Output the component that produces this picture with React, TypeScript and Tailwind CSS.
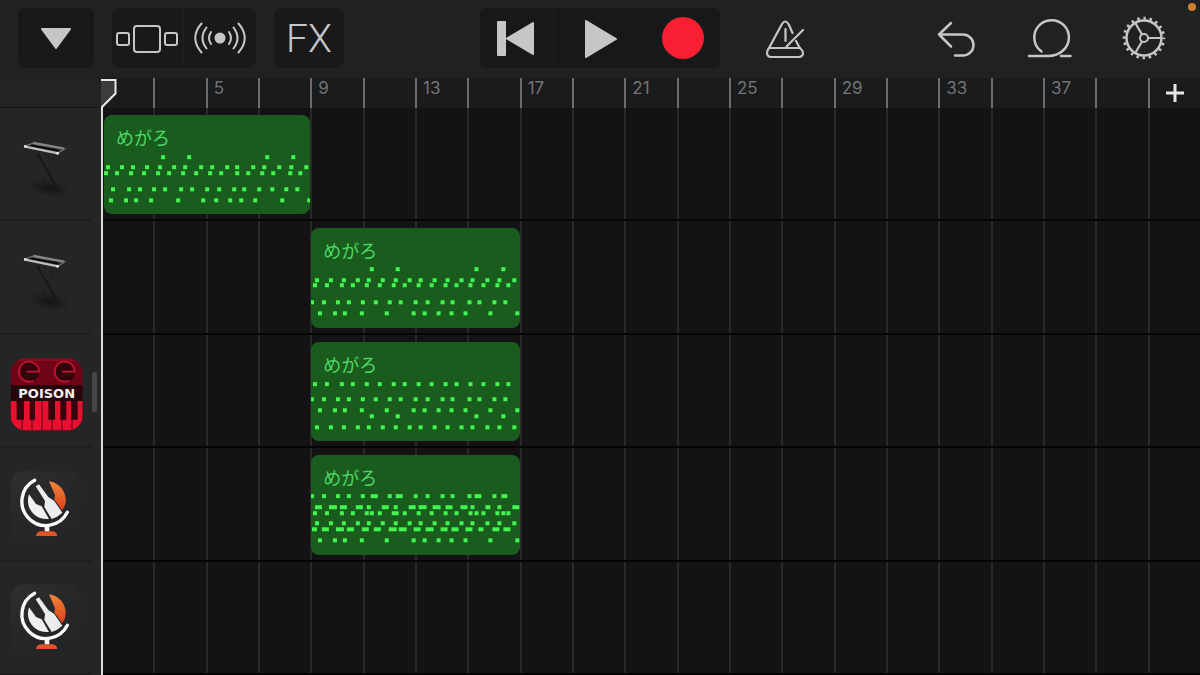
import type { ReactNode } from 'react'

// plain x positions or [x, width] pairs, grouped by vertical position
type NoteRow = { y: number; notes: (number | [number, number])[] }
type Region = { name: string; start: string; width: number; rows: NoteRow[] }
type Track = { name: string; icon: ReactNode; region?: Region }

const HIGH = [61, 87, 166, 193]
const OFFBEAT = [6, 20, 33, 47, 58, 72, 85, 99, 110, 124, 137, 151, 162, 177, 189, 204]
const BEAT = [4, 16, 31, 42, 56, 69, 83, 94, 108, 121, 135, 146, 160, 173, 187, 198]
const MID = [1, 13, 27, 38, 52, 65, 79, 90, 105, 117, 132, 142, 159, 169, 184, 195]
const BASS = [9, 24, 34, 51, 76, 103, 114, 128, 141, 155, 180, 207]

const melodyIntro: NoteRow[] = [
  { y: 42, notes: [59, 85, 163, 189] },
  { y: 52, notes: [4, 18, 29, 43, 56, 70, 81, 97, 108, 123, 133, 149, 160, 175, 187, 202] },
  { y: 58, notes: [2, 13, 27, 40, 54, 65, 79, 92, 106, 117, 133, 144, 158, 169, 186, 196] },
  { y: 74, notes: [9, 25, 36, 50, 61, 77, 88, 103, 115, 130, 140, 155, 168, 182, 193] },
  { y: 85, notes: [7, 22, 32, 47, 74, 99, 112, 126, 137, 151, 178, 205] },
]

const melody: NoteRow[] = [
  { y: 41, notes: HIGH },
  { y: 52, notes: OFFBEAT },
  { y: 57, notes: BEAT },
  { y: 74, notes: MID },
  { y: 85, notes: BASS },
]

const harmony: NoteRow[] = [
  { y: 42, notes: BEAT },
  { y: 57, notes: MID },
  { y: 68, notes: BASS },
  { y: 74, notes: HIGH },
  { y: 85, notes: OFFBEAT },
]

const chords: NoteRow[] = [
  { y: 41, notes: [1, 13, 27, 38, 52, [60, 7], 79, [85, 7], 105, 117, 132, 142, 159, [164, 7], 184, [191, 6]] },
  {
    y: 52,
    notes: [
      [4, 7], [18, 8], [29, 7], [45, 7], 58, [71, 7], 85, [98, 7], [108, 8], [122, 8],
      [135, 7], [150, 7], 162, [175, 5], 189, [202, 7],
    ],
  },
  { y: 58, notes: [4, 16, 31, 42, 56, 61, 69, [81, 7], 94, 108, 121, 135, 146, 160, 166, 173, 187, 193, 198] },
  { y: 68, notes: OFFBEAT },
  {
    y: 74,
    notes: [
      [1, 5], [11, 7], [25, 8], [36, 7], [51, 7], [63, 7], [78, 8], [88, 8], [103, 7],
      [115, 8], [130, 7], [141, 7], [155, 7], [168, 5], [182, 7], [193, 7],
    ],
  },
  { y: 85, notes: BASS },
]

const bars = Array.from({ length: 21 }, (_, i) => i * 2 + 1)

function KeyboardIcon() {
  return (
    <svg viewBox="18 69 240 240" className="size-20" aria-hidden="true">
      <defs>
        <radialGradient id="stand-shadow">
          <stop offset="0" stopColor="#151517" />
          <stop offset="1" stopColor="#151517" stopOpacity="0" />
        </radialGradient>
      </defs>
      <ellipse cx="147" cy="250" rx="66" ry="26" fill="url(#stand-shadow)" transform="rotate(10 147 250)" />
      <path d="M112 144 L178 262" stroke="#18181a" strokeWidth="6" />
      <path d="M160 160 L124 240" stroke="#202022" strokeWidth="4" />
      <path d="M72 122 L108 110 L198 128 L175 148 Z" fill="#2e2e31" />
      <path d="M100 114 L192 131" stroke="#858588" strokeWidth="7" />
      <path d="M90 121 L174 136" stroke="#09090a" strokeWidth="5" />
      <path d="M72 124 L174 145" stroke="#bdbdc0" strokeWidth="7" />
      <path d="M72 124 L106 112 M175 144 L197 130" stroke="#87878a" strokeWidth="3" />
      <circle cx="76" cy="124" r="4" fill="#e2e2e4" />
      <circle cx="173" cy="145" r="4" fill="#f0f0f2" />
    </svg>
  )
}

function PoisonIcon() {
  return (
    <svg viewBox="18 48 240 240" className="size-20" aria-hidden="true">
      <defs>
        <clipPath id="poison-tile">
          <rect x="32" y="58" width="216" height="216" rx="44" />
        </clipPath>
      </defs>
      <g clipPath="url(#poison-tile)">
        <rect x="32" y="58" width="216" height="216" fill="#700417" />
        <rect x="32" y="58" width="216" height="8" fill="#8d0a20" />
        <circle cx="88" cy="98" r="30" fill="#32030c" />
        <circle cx="195" cy="98" r="30" fill="#32030c" />
        <path
          d="M80 98 H117 A30 30 0 1 0 100 125 M187 98 H224 A30 30 0 1 0 207 125"
          fill="none"
          stroke="#cb1531"
          strokeWidth="5"
        />
        <rect x="32" y="138" width="216" height="48" fill="#26060b" />
        <rect x="32" y="186" width="216" height="90" fill="#e8102f" />
        <path
          d="M66 186 V276 M96 186 V276 M126 186 V276 M156 186 V276 M186 186 V276 M216 186 V276"
          stroke="#7d0619"
          strokeWidth="4"
        />
        <path
          d="M50 186 h22 v56 h-22z M89 186 h16 v56 h-16z M145 186 h20 v56 h-20z M181 186 h18 v56 h-18z M213 186 h20 v56 h-20z"
          fill="#33040c"
        />
      </g>
      <text
        x="140"
        y="176"
        textAnchor="middle"
        fill="#f4eef0"
        fontSize="39"
        fontWeight="700"
        fontFamily="'DejaVu Sans', sans-serif"
      >
        POISON
      </text>
    </svg>
  )
}

function MicIcon() {
  return (
    <svg viewBox="18 55 240 240" className="size-20" aria-hidden="true">
      <defs>
        <linearGradient id="mic-orange" x1="0" y1="0" x2="0" y2="1">
          <stop offset="0" stopColor="#ef8638" />
          <stop offset="1" stopColor="#dd3f1c" />
        </linearGradient>
        <linearGradient id="mic-tile" x1="0" y1="0" x2="0.7" y2="1">
          <stop offset="0" stopColor="#303031" />
          <stop offset="1" stopColor="#252527" stopOpacity="0" />
        </linearGradient>
      </defs>
      <rect x="33" y="65" width="212" height="212" rx="38" fill="url(#mic-tile)" />
      <path d="M147 95 C182 100 203 132 196 163 Q193 174 186 182 L163 149 L165 137 Z" fill="url(#mic-orange)" />
      <path d="M87 134 C77 164 92 194 118 204 Q132 209 147 208 L125 170 L108 163 Z" fill="#f0f0f2" />
      <path d="M107 110 L117 104 L145 142 L163 154 L187 189 Q172 203 155 208 L133 172 L135 154 Z" fill="#ececee" />
      <path d="M104 92 A72 72 0 1 0 202 188" fill="none" stroke="#fafafa" strokeWidth="10" strokeLinecap="round" />
      <path d="M134 224 h14 v22 h-14z" fill="#fafafa" />
      <path d="M108 259 Q110 245 124 245 H156 Q170 245 172 259 Z" fill="#e5522a" />
    </svg>
  )
}

const tracks: Track[] = [
  {
    name: 'Keyboard 1',
    icon: <KeyboardIcon />,
    region: { name: 'めがろ', start: 'col-start-1 ml-[3px]', width: 206, rows: melodyIntro },
  },
  {
    name: 'Keyboard 2',
    icon: <KeyboardIcon />,
    region: { name: 'めがろ', start: 'col-start-5 ml-px', width: 209, rows: melody },
  },
  {
    name: 'Poison',
    icon: <PoisonIcon />,
    region: { name: 'めがろ', start: 'col-start-5 ml-px', width: 209, rows: harmony },
  },
  {
    name: 'Microphone 1',
    icon: <MicIcon />,
    region: { name: 'めがろ', start: 'col-start-5 ml-px', width: 209, rows: chords },
  },
  { name: 'Microphone 2', icon: <MicIcon /> },
]

function Toolbar() {
  return (
    <header className="relative grid grid-cols-[1fr_auto_1fr] items-start bg-[#202123] px-[18px] pt-2 pb-2.5 text-[#c6c6c8]">
      <div className="flex gap-[18px]">
        <button aria-label="Menu" className="flex h-15 w-[76px] items-center justify-center rounded-lg bg-[#17181a]">
          <svg width="32" height="22" viewBox="0 0 32 22" aria-hidden="true">
            <path d="M2 2 H30 L16 21 Z" fill="currentColor" stroke="currentColor" strokeWidth="2" strokeLinejoin="round" />
          </svg>
        </button>
        <div className="flex rounded-lg bg-[#19191b]">
          <button
            aria-label="Browser"
            className="flex h-15 w-[72px] items-center justify-center border-r border-[#202022]"
          >
            <svg width="64" height="30" viewBox="1 -1 64 30" fill="none" stroke="currentColor" strokeWidth="2" aria-hidden="true">
              <rect x="2" y="9" width="12" height="12" rx="2" />
              <rect x="19" y="2" width="26" height="26" rx="3" />
              <rect x="50" y="9" width="12" height="12" rx="2" />
            </svg>
          </button>
          <button aria-label="Live Loops" className="flex h-15 w-[72px] items-center justify-center">
            <svg
              width="56"
              height="34"
              viewBox="-28 -17 56 34"
              fill="none"
              stroke="currentColor"
              strokeWidth="2"
              strokeLinecap="round"
              aria-hidden="true"
            >
              <circle r="5.5" fill="currentColor" stroke="none" />
              <path d="M9 -6 Q13 0 9 6 M13.5 -10.5 Q21.5 0 13.5 10.5 M18.5 -14.5 Q31 0 18.5 14.5" />
              <path d="M-9 -6 Q-13 0 -9 6 M-13.5 -10.5 Q-21.5 0 -13.5 10.5 M-18.5 -14.5 Q-31 0 -18.5 14.5" />
            </svg>
          </button>
        </div>
        <button className="h-15 w-[70px] rounded-lg bg-[#19191b] pt-0.5 font-[Roboto,sans-serif] text-[39px] leading-none font-light">
          FX
        </button>
      </div>

      <div className="flex rounded-md bg-[#17181a]">
        <button aria-label="Go to beginning" className="flex h-15 w-[74px] items-center justify-center border-r border-[#202022]">
          <svg width="40" height="38" viewBox="0 0 40 38" fill="currentColor" aria-hidden="true">
            <rect x="0" y="2" width="9" height="35" rx="1" />
            <path d="M10 19.5 L36 4 V35 Z" stroke="currentColor" strokeWidth="2" strokeLinejoin="round" />
          </svg>
        </button>
        <button aria-label="Play" className="flex h-15 w-[92px] items-center justify-center border-r border-[#1b1c1e]">
          <svg width="34" height="40" viewBox="0 0 34 40" fill="currentColor" aria-hidden="true">
            <path d="M3 3 L33 21 L3 39 Z" stroke="currentColor" strokeWidth="2" strokeLinejoin="round" />
          </svg>
        </button>
        <button aria-label="Record" className="flex h-15 w-[74px] items-center justify-center">
          <span className="size-[42px] rounded-full bg-[#f71f31]" />
        </button>
      </div>

      <div className="flex justify-end gap-[18px]">
        <button aria-label="Metronome" className="mr-auto ml-[35px] flex h-15 w-15 items-center justify-center">
          <svg
            width="40"
            height="40"
            viewBox="0 0 40 40"
            fill="none"
            stroke="currentColor"
            strokeWidth="2.2"
            strokeLinecap="round"
            strokeLinejoin="round"
            aria-hidden="true"
          >
            <path d="M27.5 15 L24 7 Q20.5 0.5 17 6 L4 30 Q1 34 2.500 37 Q3.500 39 6 39 H34 Q38 38.500 38 35 Q37.5 32 34.500 29.500 L31 23" />
            <path d="M4 30 H35 M20.5 11 V23 M38 12 L21.5 28.5" />
          </svg>
        </button>
        <button aria-label="Undo" className="flex h-15 w-[76px] items-center justify-center">
          <svg
            width="40"
            height="40"
            viewBox="0 0 40 40"
            fill="none"
            stroke="currentColor"
            strokeWidth="2.5"
            strokeLinecap="round"
            strokeLinejoin="round"
            aria-hidden="true"
          >
            <path d="M15 5 L3 16.5 L15 28.5 M3 16.5 H27 A10.5 10.5 0 0 1 27 37.5 H19" />
          </svg>
        </button>
        <button aria-label="Loop browser" className="flex h-15 w-[76px] items-center justify-center">
          <svg
            width="46"
            height="42"
            viewBox="0 0 46 42"
            fill="none"
            stroke="currentColor"
            strokeWidth="2.5"
            strokeLinecap="round"
            aria-hidden="true"
          >
            <path d="M14.5 34.5 A17.3 17.3 0 1 1 36 33.5 Q30 39 21 39 H2" />
            <path d="M34 39 H43.5" />
          </svg>
        </button>
        <button aria-label="Settings" className="flex h-15 w-[76px] items-center justify-center">
          <svg width="44" height="44" viewBox="-22 -22 44 44" fill="none" stroke="currentColor" aria-hidden="true">
            <circle r="17.5" strokeWidth="2.5" />
            <circle r="19.75" strokeWidth="3" strokeDasharray="2.4 3.805" strokeDashoffset="1.2" />
            <circle r="4" strokeWidth="2" />
            <path d="M4 0 H17 M-2 -3.5 L-8.7 -15 M-2 3.5 L-8.7 15" strokeWidth="2.2" />
          </svg>
        </button>
      </div>

      <span className="absolute top-[3px] right-1 size-2 rounded-full bg-[#c9812c]" />
    </header>
  )
}

function Ruler() {
  return (
    <div className="flex h-[30px]">
      <div className="w-[101px] shrink-0 border-b border-[#161617] bg-[#222324]" />
      <div className="grid flex-1 grid-cols-21 bg-[#1a1b1d]">
        {bars.map((bar, i) => (
          <div key={bar} className={i === 0 ? '' : 'border-l-2 border-[#6c6c6e]'}>
            {i > 0 && i < 20 && i % 2 === 0 && (
              <span className="block pl-1.5 font-[Inter,sans-serif] text-[17px] leading-5 text-[#737375]">{bar}</span>
            )}
            {i === 20 && (
              <button aria-label="Add section" className="flex h-full w-full items-center justify-center text-[#e6e6e8]">
                <svg width="18" height="18" viewBox="0 0 18 18" stroke="currentColor" strokeWidth="3" aria-hidden="true">
                  <path d="M9 0 V18 M0 9 H18" />
                </svg>
              </button>
            )}
          </div>
        ))}
      </div>
    </div>
  )
}

function RegionBlock({ region }: { region: Region }) {
  return (
    <div
      className={`relative col-span-4 row-start-1 mt-[7px] mb-[5px] overflow-hidden rounded-lg bg-[#195c1d] ${region.start}`}
    >
      <svg
        className="absolute inset-0 h-full w-full"
        viewBox={`0 0 ${region.width} 99`}
        preserveAspectRatio="none"
        fill="#43f550"
        aria-hidden="true"
      >
        {region.rows.map((row) =>
          row.notes.map((note) => {
            const [x, w] = Array.isArray(note) ? note : [note - 2, 4]
            return <rect key={`${row.y}-${x}`} x={x} y={row.y - 2} width={w} height="4" />
          }),
        )}
      </svg>
      <span className="relative block px-3 pt-2.5 font-['Noto_Sans_CJK_JP',sans-serif] text-[18px] leading-6 text-[#4cd765]">
        {region.name}
      </span>
    </div>
  )
}

function TrackRow({ track }: { track: Track }) {
  return (
    <li className="flex min-h-24 flex-1">
      <div className="w-[101px] shrink-0 bg-[#242527] pr-[10px]">
        <button
          aria-label={track.name}
          className="flex h-full w-full items-center justify-center border-b-2 border-[#1d1d1f] pt-2"
        >
          {track.icon}
        </button>
      </div>
      <div className="grid flex-1 grid-cols-21 grid-rows-1 border-b-2 border-[#050506] bg-[#131315]">
        {bars.map((bar, i) => (
          <div
            key={bar}
            className={i === 0 ? 'row-start-1' : 'row-start-1 border-l-2 border-[#28282a]'}
            style={{ gridColumnStart: i + 1 }}
          />
        ))}
        {track.region && <RegionBlock region={track.region} />}
      </div>
    </li>
  )
}

export default function App() {
  return (
    <main className="flex min-h-screen flex-col bg-[#131315]">
      <Toolbar />
      <section className="relative flex flex-1 flex-col">
        <Ruler />
        <div className="relative flex flex-1 flex-col">
          <ul className="flex flex-1 flex-col">
            {tracks.map((track) => (
              <TrackRow key={track.name} track={track} />
            ))}
          </ul>

          {/* Track list scroll indicator */}
          <div className="absolute top-1/2 left-[92px] h-10 w-[5px] -translate-y-1/2 rounded-sm bg-[#454648]" />
        </div>

        {/* Playhead */}
        <div className="pointer-events-none absolute inset-y-0 left-[101px] flex flex-col">
          <svg width="16" height="31" viewBox="0 0 16 31" aria-hidden="true">
            <path d="M0 2 H14.5 V15.5 L1 29 V31 H0 Z" fill="#3b3c3e" />
            <path d="M0 2 H14.5 V15.5 L1 29 V31" fill="none" stroke="#e8e8ea" strokeWidth="2" />
          </svg>
          <div className="w-0.5 flex-1 bg-[#dcdcde]" />
        </div>
      </section>
    </main>
  )
}
